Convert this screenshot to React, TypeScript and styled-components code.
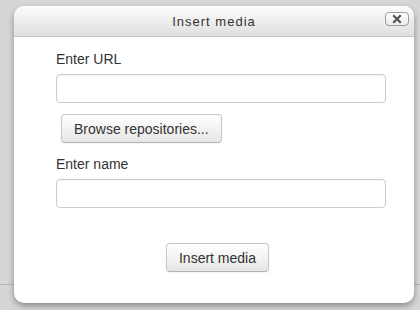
import React from 'react'
import styled, { createGlobalStyle } from 'styled-components'

const GlobalStyle = createGlobalStyle`
  html, body {
    margin: 0;
    padding: 0;
  }
  body {
    width: 420px;
    height: 310px;
    overflow: hidden;
    background:
      linear-gradient(#b8b8b8, #b8b8b8) 0 284px / 100% 1px no-repeat,
      #d6d6d6;
    font-family: "Liberation Sans", Arial, sans-serif;
  }
`

const Page = styled.div`
  padding: 6px 0 0 14px;
`

const Dialog = styled.div`
  width: 400px;
  height: 297px;
  background: #fff;
  border-radius: 10px;
  box-shadow: 0 3px 6px rgba(0, 0, 0, 0.35);
  display: flex;
  flex-direction: column;
  overflow: hidden;
`

const Header = styled.div`
  position: relative;
  height: 30px;
  flex-shrink: 0;
  display: flex;
  align-items: center;
  justify-content: center;
  background: linear-gradient(#fdfdfd, #dedede);
  border-bottom: 1px solid #c4c4c4;
`

const Title = styled.div`
  font-size: 13px;
  letter-spacing: 1px;
  color: #333;
  padding-top: 1px;
`

const Close = styled.button`
  position: absolute;
  right: 5px;
  top: 6px;
  width: 24px;
  height: 14px;
  padding: 0;
  border: 1px solid #9a9a9a;
  border-radius: 4px;
  background: linear-gradient(#ffffff, #ececec);
  display: flex;
  align-items: center;
  justify-content: center;
`

const Body = styled.div`
  padding: 14px 28px 0 42px;
  display: flex;
  flex-direction: column;
`

const Label = styled.label<{ $gap?: number }>`
  font-size: 14px;
  color: #333;
  line-height: 16px;
  margin: ${p => p.$gap ?? 0}px 0 7px;
`

const Input = styled.input`
  box-sizing: border-box;
  width: 330px;
  height: 29px;
  border: 1px solid #ccc;
  border-radius: 4px;
  background: #fff;
  box-shadow: inset 0 1px 1px rgba(0, 0, 0, 0.05);
  margin: 0 0 11px;
`

const Button = styled.button<{ $offset?: number }>`
  box-sizing: border-box;
  height: 29px;
  padding: 0 12px;
  font-family: "Liberation Sans", Arial, sans-serif;
  font-size: 14px;
  color: #333;
  border: 1px solid #c8c8c8;
  border-bottom-color: #b3b3b3;
  border-radius: 4px;
  background: linear-gradient(#ffffff, #e6e6e6);
  box-shadow: 0 1px 2px rgba(0, 0, 0, 0.05);
  margin-left: ${p => p.$offset ?? 0}px;
`

const ButtonRow = styled.div`
  display: flex;
`

const Footer = styled.div`
  display: flex;
  justify-content: center;
  padding: 24px 0 0 7px;
`

export default function App() {
  return (
    <>
      <GlobalStyle />
      <Page>
        <Dialog>
          <Header>
            <Title>Insert media</Title>
            <Close aria-label="Close">
              <svg width="10" height="10" viewBox="0 0 10 10">
                <path d="M2 2 L8 8 M8 2 L2 8" stroke="#555" strokeWidth="2.2" strokeLinecap="square" />
              </svg>
            </Close>
          </Header>
          <Body>
            <Label>Enter URL</Label>
            <Input />
            <ButtonRow>
              <Button $offset={5}>Browse repositories...</Button>
            </ButtonRow>
            <Label $gap={13}>Enter name</Label>
            <Input />
          </Body>
          <Footer>
            <Button>Insert media</Button>
          </Footer>
        </Dialog>
      </Page>
    </>
  )
}
